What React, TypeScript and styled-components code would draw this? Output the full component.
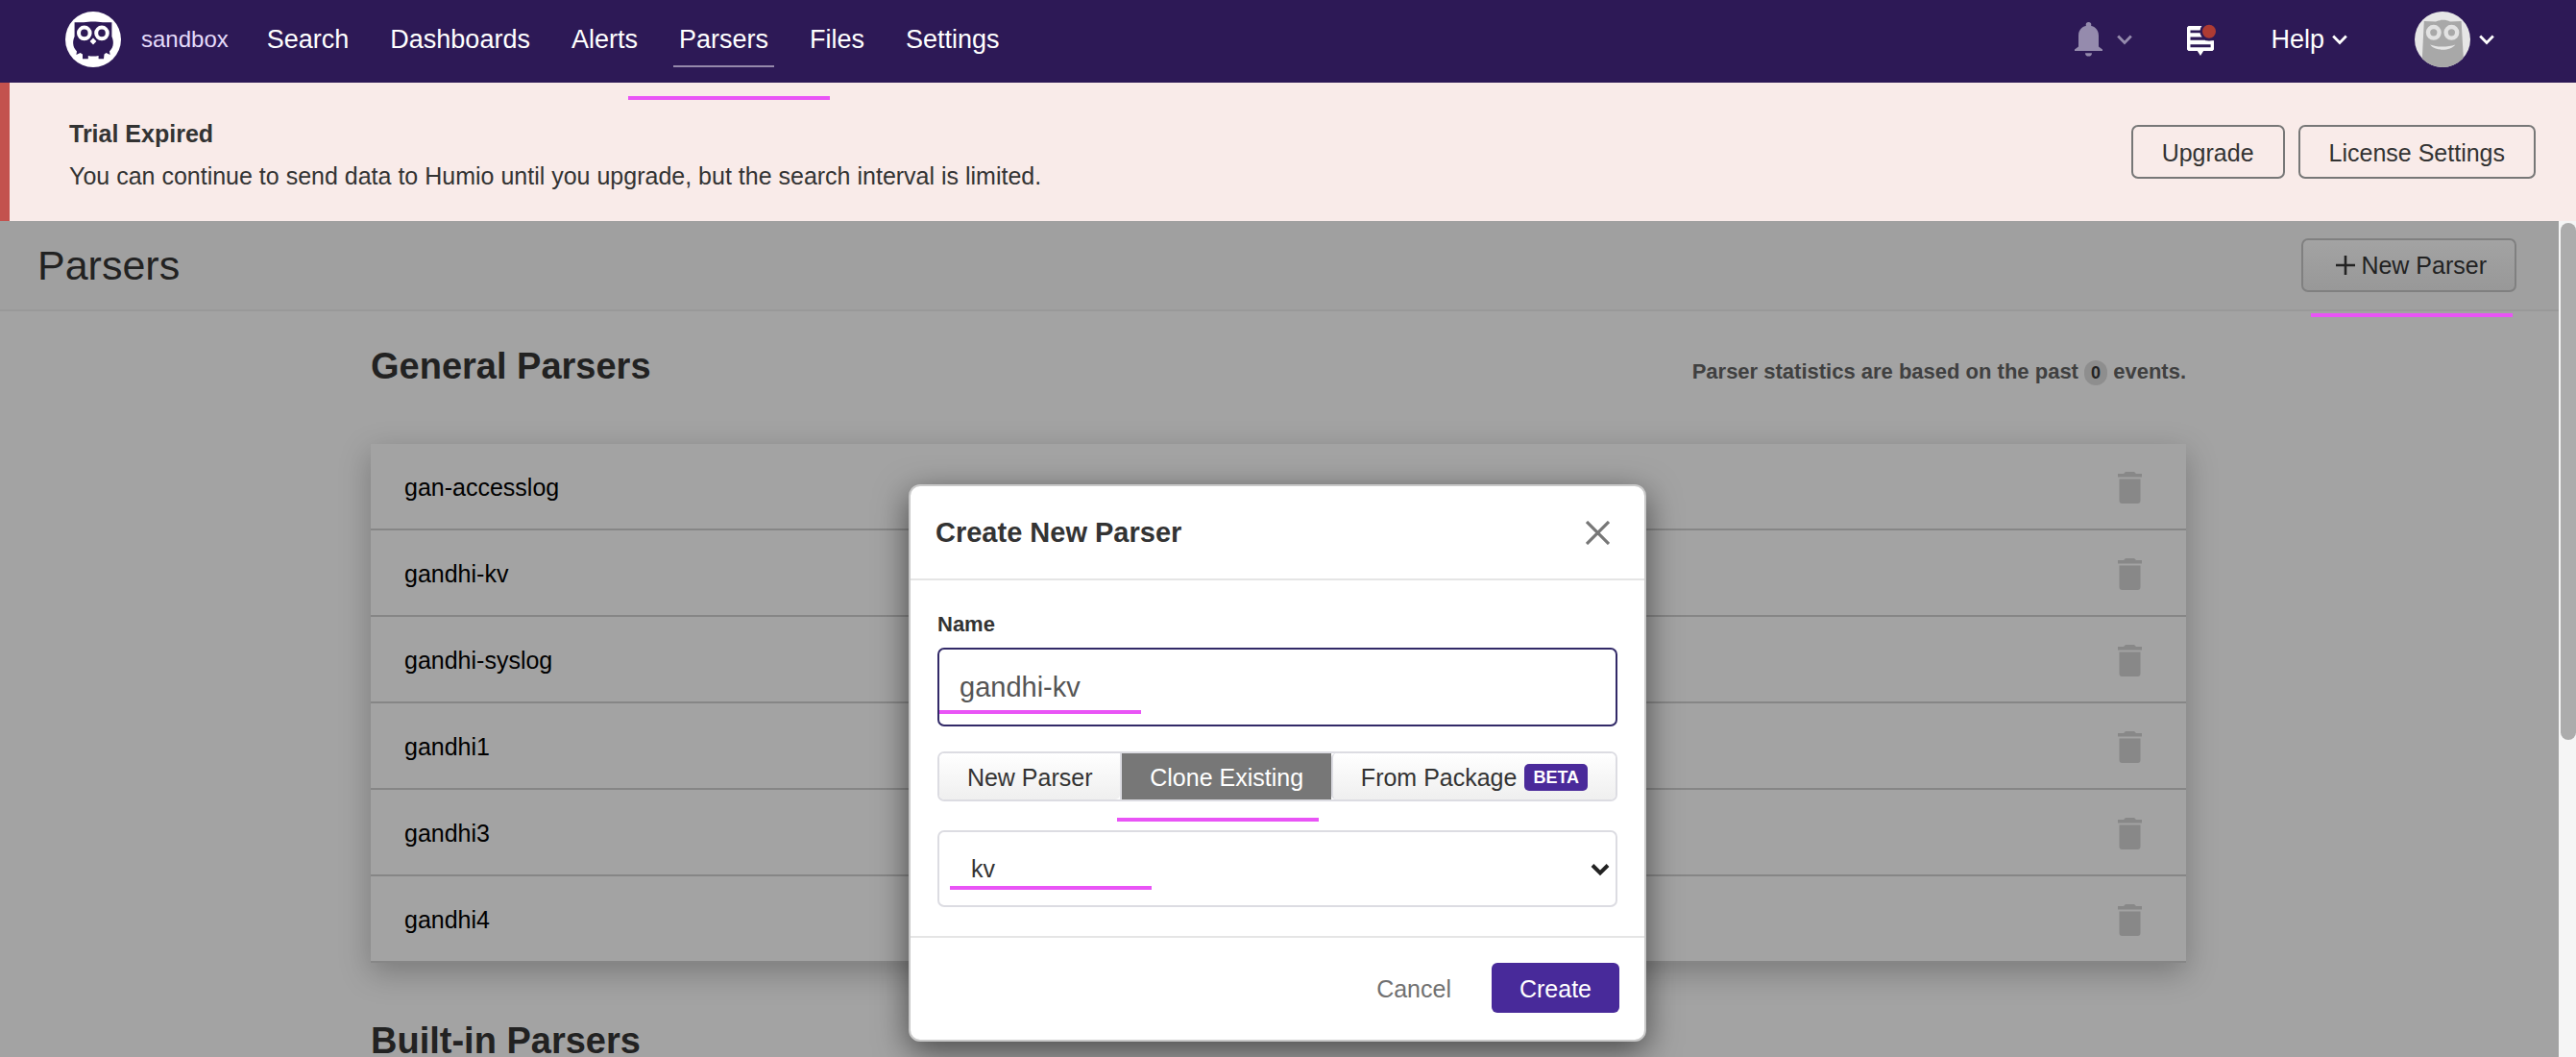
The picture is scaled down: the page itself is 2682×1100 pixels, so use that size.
import React, { useState } from "react";
import styled, { createGlobalStyle, css } from "styled-components";

const GlobalStyle = createGlobalStyle`
  *, *::before, *::after { box-sizing: border-box; }
  body {
    margin: 0;
    font-family: "Liberation Sans", Arial, Helvetica, sans-serif;
    font-size: 25px;
    color: #333333;
    background: #a3a3a3;
  }
  button, input, select { font: inherit; color: inherit; margin: 0; }
  button { cursor: pointer; white-space: nowrap; }
  a { color: inherit; text-decoration: none; }
  h1, h2, p, ul { margin: 0; padding: 0; }
  svg { display: block; flex: none; }
`;

const Page = styled.div`
  height: 100vh;
  display: flex;
  flex-direction: column;
  overflow: hidden;
`;

/* Highlight strokes laid over the controls of the walkthrough */
const Mark = styled.span<{ $left: number; $top: number }>`
  position: absolute;
  left: ${(p) => p.$left}px;
  top: ${(p) => p.$top}px;
  width: 210px;
  height: 4px;
  background: #e954f6;
  z-index: 5;
  pointer-events: none;
`;

/* ---------- Top bar ---------- */

const TopBar = styled.header`
  flex: none;
  height: 86px;
  padding: 0 85px 4px 68px;
  display: flex;
  align-items: center;
  background: #2d1956;
  color: #ffffff;
  font-size: 27px;
`;

const RepoLink = styled.a`
  display: flex;
  align-items: center;
  gap: 21px;
  font-size: 24px;
  color: #e5dbfb;
`;

const Nav = styled.nav`
  display: flex;
  gap: 31px;
  margin-left: 34px;
  height: 100%;
`;

const NavLink = styled.a<{ $active?: boolean }>`
  position: relative;
  display: flex;
  align-items: center;
  padding: 0 6px;
  ${(p) =>
    p.$active &&
    css`
      &::after {
        content: "";
        position: absolute;
        left: 0;
        right: 0;
        bottom: 12px;
        height: 2px;
        background: #9589ab;
      }
    `}
`;

const TopActions = styled.div`
  margin-left: auto;
  display: flex;
  align-items: center;
  gap: 57px;
`;

const MenuButton = styled.button<{ $gap: number; $faded?: boolean }>`
  display: flex;
  align-items: center;
  gap: ${(p) => p.$gap}px;
  padding: 0;
  border: 0;
  background: none;
  color: ${(p) => (p.$faded ? "#958bad" : "#ffffff")};
`;

const AvatarSlot = styled.div`
  padding-left: 13px;
`;

/* ---------- Trial banner ---------- */

const Banner = styled.section`
  flex: none;
  display: flex;
  align-items: center;
  justify-content: space-between;
  padding: 25px 42px 25px 62px;
  border-left: 10px solid #c3524e;
  background: #f9ebe9;
`;

const BannerText = styled.div`
  padding-top: 6px;
  line-height: 44px;
`;

const ButtonRow = styled.div`
  display: flex;
  gap: 14px;
`;

const OutlineButton = styled.button`
  height: 56px;
  padding: 2px 30px 0;
  border: 2px solid #777777;
  border-radius: 7px;
  background: none;
`;

/* ---------- Workspace ---------- */

const Workspace = styled.div`
  flex: 1;
  min-height: 0;
  display: flex;
`;

const Content = styled.main`
  position: relative;
  flex: 1;
  min-width: 0;
  overflow: hidden;
  background: #a3a3a3;
`;

const ScrollTrack = styled.div`
  flex: none;
  width: 18px;
  padding: 2px 0 0 2px;
  background: #f5f5f5;
`;

const ScrollThumb = styled.div`
  height: 62%;
  border-radius: 8px;
  background: #acacac;
`;

const PageHead = styled.div`
  display: flex;
  align-items: center;
  justify-content: space-between;
  height: 94px;
  padding: 0 44px 0 39px;
  border-bottom: 2px solid #999999;
  background: #a0a0a0;
`;

const PageTitle = styled.h1`
  font-size: 43px;
  font-weight: 400;
  color: #222222;
`;

const NewParserButton = styled.button`
  position: relative;
  display: flex;
  align-items: center;
  gap: 6px;
  height: 56px;
  padding: 0 29px 0 34px;
  border: 2px solid #808080;
  border-radius: 7px;
  background: linear-gradient(#a3a3a3, #989898);
  color: #222222;
`;

const Sections = styled.div`
  max-width: 1892px;
  margin: 0 auto;
  padding: 34px 2px 0 0;
  display: flex;
  flex-direction: column;
  gap: 58px;
`;

const SectionHead = styled.div`
  display: flex;
  align-items: baseline;
  justify-content: space-between;
`;

const SectionTitle = styled.h2`
  font-size: 38px;
  font-weight: 700;
  line-height: 46px;
  color: #222222;
`;

const Stats = styled.p`
  font-size: 22px;
  font-weight: 700;
  line-height: 26px;
  color: #404040;
`;

const CountBadge = styled.span`
  display: inline-block;
  width: 24px;
  border-radius: 13px;
  background: #8e8e8e;
  color: #222222;
  font-size: 18px;
  line-height: 26px;
  text-align: center;
`;

const ParserList = styled.ul`
  list-style: none;
  background: #a3a3a3;
  box-shadow: 0 10px 30px rgba(0, 0, 0, 0.25);
`;

const ParserRow = styled.li`
  display: flex;
  align-items: center;
  justify-content: space-between;
  height: 90px;
  padding: 2px 46px 0 35px;
  border-bottom: 2px solid #868686;
  color: #000000;
`;

const IconButton = styled.button`
  padding: 0;
  border: 0;
  background: none;
`;

/* ---------- Dialog ---------- */

const DialogLayer = styled.div`
  position: absolute;
  inset: 0;
  display: flex;
  align-items: flex-start;
  justify-content: center;
  padding: 274px 4px 0 0;
`;

const Dialog = styled.form`
  width: 768px;
  border: 2px solid #c9c9c9;
  border-radius: 12px;
  background: #ffffff;
  box-shadow: 0 10px 34px rgba(0, 0, 0, 0.55);
`;

const DialogHead = styled.div`
  display: flex;
  align-items: center;
  justify-content: space-between;
  height: 98px;
  padding: 0 36px 0 26px;
  border-bottom: 2px solid #e5e5e5;
`;

const DialogTitle = styled.h2`
  font-size: 29px;
  font-weight: 700;
`;

const DialogBody = styled.div`
  display: flex;
  flex-direction: column;
  padding: 32px 28px 30px;
`;

const FieldLabel = styled.label`
  margin-bottom: 10px;
  font-size: 22px;
  font-weight: 700;
  line-height: 28px;
`;

const Field = styled.div`
  position: relative;
`;

const NameInput = styled.input`
  display: block;
  width: 100%;
  height: 82px;
  padding: 0 21px;
  border: 2px solid #322a68;
  border-radius: 7px;
  outline: 0;
  background: #ffffff;
  font-size: 29px;
  color: #555555;
`;

const Segments = styled.div`
  position: relative;
  display: flex;
  height: 52px;
  margin: 26px 0 30px;
  border: 2px solid #dcdce2;
  border-radius: 7px;
`;

const Segment = styled.button<{ $active?: boolean }>`
  flex: 1 1 auto;
  display: flex;
  align-items: center;
  justify-content: center;
  gap: 8px;
  padding: 2px 0 0;
  border: 0;
  border-radius: 5px;
  background: linear-gradient(#ffffff, #efefef);
  & + & {
    border-left: 2px solid #dcdce2;
  }
  ${(p) =>
    p.$active &&
    css`
      border-radius: 0;
      background: #777777;
      color: #ffffff;
    `}
`;

const BetaTag = styled.span`
  padding: 0 9px;
  border-radius: 5px;
  background: #4a2a9a;
  color: #ffffff;
  font-size: 18px;
  font-weight: 700;
  line-height: 28px;
`;

const ParserSelect = styled.select`
  display: block;
  width: 100%;
  height: 80px;
  padding: 0 33px;
  border: 2px solid #dcdce2;
  border-radius: 7px;
  appearance: none;
  background: #ffffff;
`;

const SelectArrow = styled.svg`
  position: absolute;
  right: 8px;
  top: 34px;
  pointer-events: none;
`;

const DialogFoot = styled.div`
  display: flex;
  justify-content: flex-end;
  gap: 42px;
  padding: 26px 26px 28px;
  border-top: 2px solid #e5e5e5;
`;

const FootButton = styled.button<{ $primary?: boolean }>`
  height: 52px;
  padding: ${(p) => (p.$primary ? "2px 29px 0" : "2px 0 0")};
  border: 0;
  border-radius: 6px;
  background: ${(p) => (p.$primary ? "#482a9a" : "none")};
  color: ${(p) => (p.$primary ? "#ffffff" : "#717171")};
`;

/* ---------- Drawings ---------- */

const OwlLogo = () => (
  <svg width="58" height="58" viewBox="0 0 58 58" aria-hidden="true">
    <circle cx="29" cy="29" r="29" fill="#fff" />
    <path
      d="M9.6 11.3H19C22 10.9 26 10.6 29 10.6S36 10.9 39 11.3H48.4V26C49.6 29 50 31 49.8 33.5C49.6 36.5 48.4 39 46 41.5L46.6 45L42.5 43L40.5 44.6L40 49.3H34.6V46C31 46.8 27 46.8 23.8 46V49.3H18V44.6L15.6 43L11.4 45L12 41.5C9.6 39 8.4 36.5 8.2 33.5C8 31 8.4 29 9.6 26Z"
      fill="#2d1956"
    />
    <g fill="none" stroke="#fff" strokeWidth="4">
      <circle cx="19.8" cy="22.4" r="5.8" />
      <circle cx="38" cy="22.4" r="5.8" />
    </g>
    <path d="M29 27.6L32.4 31L29 34.6L25.6 31Z" fill="#fff" />
  </svg>
);

const Avatar = () => (
  <svg width="58" height="58" viewBox="0 0 58 58" aria-hidden="true">
    <defs>
      <clipPath id="avatar-round">
        <circle cx="29" cy="29" r="29" />
      </clipPath>
    </defs>
    <g clipPath="url(#avatar-round)">
      <rect width="58" height="58" fill="#e6e6e6" />
      <path d="M9.8 10L22 10.4C26 8.3 33 8.3 37 10.4L48.6 10L51.4 58H7.4Z" fill="#a8a8a8" />
      <g fill="none" stroke="#e2e2e2" strokeWidth="4.4">
        <circle cx="19.8" cy="21.8" r="5.8" />
        <circle cx="38.4" cy="21.8" r="5.8" />
      </g>
      <path d="M16 34.4C24 37.2 34 37.2 42.4 34.4C37 41.4 21.6 41.4 16 34.4Z" fill="#e6e6e6" />
    </g>
  </svg>
);

const Bell = () => (
  <svg width="29" height="36" viewBox="0 0 29 36" fill="currentColor" aria-hidden="true">
    <circle cx="14.5" cy="2.8" r="2.8" />
    <path d="M4 25.6V14C4 7.4 9 3.6 14.5 3.6S25 7.4 25 14V25.6L29 28.4V30H0V28.4Z" />
    <path d="M11 32.2H18C18 34.4 16.6 35.6 14.5 35.6S11 34.4 11 32.2Z" />
  </svg>
);

const News = () => (
  <svg width="30" height="33" viewBox="0 -2 30 33" aria-hidden="true">
    <path d="M1.5 0H26.5L28 1.5V24.5L26.5 26H17.2L14 31L10.8 26H1.5L0 24.5V1.5Z" fill="#fff" />
    <path d="M3.5 4.4H14V7.2H3.5ZM3.5 11.4H20V14.8H3.5ZM3.5 19.2H24.6V22.2H3.5Z" fill="#2d1956" />
    <path d="M19 -2H30V15.2H19Z" fill="#2d1956" />
    <circle cx="23" cy="5.8" r="9.6" fill="#2d1956" />
    <circle cx="23" cy="5.8" r="7" fill="#ae3b33" />
  </svg>
);

const Chevron = () => (
  <svg width="16" height="11" viewBox="0 0 16 11" aria-hidden="true">
    <path d="M1.2 1.5L8 8.4L14.8 1.5" fill="none" stroke="currentColor" strokeWidth="2.8" />
  </svg>
);

const Plus = () => (
  <svg width="20" height="20" viewBox="0 0 20 20" aria-hidden="true">
    <path d="M10 0V20M0 10H20" stroke="currentColor" strokeWidth="2.6" />
  </svg>
);

const Cross = () => (
  <svg width="25" height="25" viewBox="0 0 25 25" aria-hidden="true">
    <path d="M1 1L24 24M24 1L1 24" stroke="#777777" strokeWidth="3.2" />
  </svg>
);

const Trash = () => (
  <svg width="25" height="33" viewBox="0 0 25 33" fill="#888888" aria-hidden="true">
    <path d="M0 2H6L8 0H17L19 2H25V5.6H0Z" />
    <path d="M1.5 7.4H23.5V30Q23.5 33 20.5 33H4.5Q1.5 33 1.5 30Z" />
  </svg>
);

/* ---------- Page ---------- */

const navItems = ["Search", "Dashboards", "Alerts", "Parsers", "Files", "Settings"];
const parsers = ["gan-accesslog", "gandhi-kv", "gandhi-syslog", "gandhi1", "gandhi3", "gandhi4"];

export default function App() {
  const [name, setName] = useState("gandhi-kv");
  const [mode, setMode] = useState("clone");
  const [source, setSource] = useState("kv");

  return (
    <Page>
      <GlobalStyle />
      <TopBar>
        <RepoLink href="#sandbox">
          <OwlLogo />
          sandbox
        </RepoLink>
        <Nav aria-label="Main">
          {navItems.map((item) => (
            <NavLink key={item} href={`#${item.toLowerCase()}`} $active={item === "Parsers"}>
              {item}
              {item === "Parsers" && <Mark $left={-47} $top={100} />}
            </NavLink>
          ))}
        </Nav>
        <TopActions>
          <MenuButton $gap={15} $faded aria-label="Notifications">
            <Bell />
            <Chevron />
          </MenuButton>
          <MenuButton $gap={0} aria-label="News">
            <News />
          </MenuButton>
          <MenuButton $gap={8}>
            Help
            <Chevron />
          </MenuButton>
          <AvatarSlot>
            <MenuButton $gap={9} aria-label="Account">
              <Avatar />
              <Chevron />
            </MenuButton>
          </AvatarSlot>
        </TopActions>
      </TopBar>

      <Banner>
        <BannerText>
          <strong>Trial Expired</strong>
          <p>You can continue to send data to Humio until you upgrade, but the search interval is limited.</p>
        </BannerText>
        <ButtonRow>
          <OutlineButton>Upgrade</OutlineButton>
          <OutlineButton>License Settings</OutlineButton>
        </ButtonRow>
      </Banner>

      <Workspace>
        <Content>
          <PageHead>
            <PageTitle>Parsers</PageTitle>
            <NewParserButton>
              <Plus />
              New Parser
              <Mark $left={8} $top={76} />
            </NewParserButton>
          </PageHead>

          <Sections>
            <SectionHead>
              <SectionTitle>General Parsers</SectionTitle>
              <Stats>
                Parser statistics are based on the past <CountBadge>0</CountBadge> events.
              </Stats>
            </SectionHead>
            <ParserList>
              {parsers.map((parser) => (
                <ParserRow key={parser}>
                  <a href={`#${parser}`}>{parser}</a>
                  <IconButton aria-label={`Delete ${parser}`}>
                    <Trash />
                  </IconButton>
                </ParserRow>
              ))}
            </ParserList>
            <SectionHead>
              <SectionTitle>Built-in Parsers</SectionTitle>
            </SectionHead>
          </Sections>

          <DialogLayer>
            <Dialog role="dialog" aria-labelledby="dialog-title" onSubmit={(e) => e.preventDefault()}>
              <DialogHead>
                <DialogTitle id="dialog-title">Create New Parser</DialogTitle>
                <IconButton type="button" aria-label="Close">
                  <Cross />
                </IconButton>
              </DialogHead>
              <DialogBody>
                <FieldLabel htmlFor="parser-name">Name</FieldLabel>
                <Field>
                  <NameInput id="parser-name" value={name} onChange={(e) => setName(e.target.value)} />
                  <Mark $left={2} $top={65} />
                </Field>
                <Segments>
                  <Segment type="button" $active={mode === "new"} onClick={() => setMode("new")}>
                    New Parser
                  </Segment>
                  <Segment type="button" $active={mode === "clone"} onClick={() => setMode("clone")}>
                    Clone Existing
                  </Segment>
                  <Segment type="button" $active={mode === "package"} onClick={() => setMode("package")}>
                    From Package <BetaTag>BETA</BetaTag>
                  </Segment>
                  <Mark $left={185} $top={67} />
                </Segments>
                <Field>
                  <ParserSelect
                    aria-label="Parser to clone"
                    value={source}
                    onChange={(e) => setSource(e.target.value)}
                  >
                    <option value="kv">kv</option>
                    <option value="accesslog">accesslog</option>
                  </ParserSelect>
                  <SelectArrow width="20" height="14" viewBox="0 0 20 14" aria-hidden="true">
                    <path d="M2 2.5L10 10.4L18 2.5" fill="none" stroke="#222222" strokeWidth="4" />
                  </SelectArrow>
                  <Mark $left={13} $top={58} />
                </Field>
              </DialogBody>
              <DialogFoot>
                <FootButton type="button">Cancel</FootButton>
                <FootButton type="submit" $primary>
                  Create
                </FootButton>
              </DialogFoot>
            </Dialog>
          </DialogLayer>
        </Content>
        <ScrollTrack aria-hidden="true">
          <ScrollThumb />
        </ScrollTrack>
      </Workspace>
    </Page>
  );
}
